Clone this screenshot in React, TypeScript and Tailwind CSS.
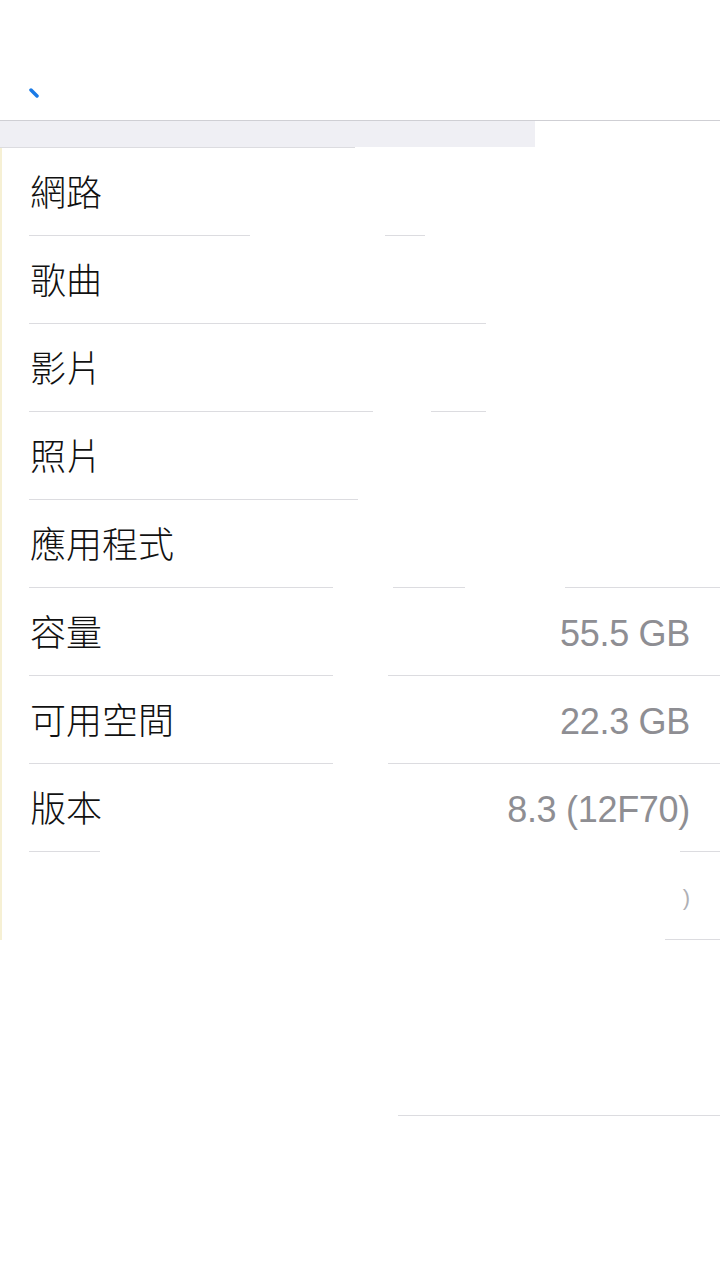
import React from 'react';

type Seg = [number, number];

interface Row {
  label: string;
  value?: string;
  faint?: boolean;
  line: Seg[];
}

const rows: Row[] = [
  { label: '網路', line: [[29, 250], [385, 425]] },
  { label: '歌曲', line: [[29, 486]] },
  { label: '影片', line: [[29, 373], [431, 486]] },
  { label: '照片', line: [[29, 358]] },
  { label: '應用程式', line: [[29, 333], [393, 465], [565, 720]] },
  { label: '容量', value: '55.5 GB', line: [[29, 333], [388, 720]] },
  { label: '可用空間', value: '22.3 GB', line: [[29, 333], [388, 720]] },
  { label: '版本', value: '8.3 (12F70)', line: [[29, 100], [680, 720]] },
  { label: '', value: ')', faint: true, line: [[665, 720]] },
  { label: '', line: [] },
  { label: '', line: [[398, 720]] },
];

// separator drawn as pieces, the rest is erased in the shot
const Separator: React.FC<{ segs: Seg[] }> = ({ segs }) => {
  let x = 0;
  return (
    <div className="flex h-px">
      {segs.map(([a, b], i) => {
        const gap = a - x;
        x = b;
        return (
          <React.Fragment key={i}>
            <div className="shrink-0" style={{ width: gap }} />
            <div className="shrink-0 bg-[#dcdce0]" style={{ width: b - a }} />
          </React.Fragment>
        );
      })}
    </div>
  );
};

const ListRow: React.FC<{ r: Row }> = ({ r }) => (
  <div>
    <div className="flex h-[87px] items-center justify-between pl-[30px] pr-[30px] pt-1">
      <span className="text-[36px] font-light leading-none text-[#111]">{r.label}</span>
      {r.value && (
        <span
          className={
            r.faint
              ? 'text-[22px] leading-none text-[#b0b0b5]'
              : 'text-[36px] leading-none tracking-[-0.3px] text-[#8e8e93]'
          }
        >
          {r.value}
        </span>
      )}
    </div>
    <Separator segs={r.line} />
  </div>
);

export default function App() {
  return (
    <div className="w-[720px] min-h-[1276px] bg-white font-['Liberation_Sans','Noto_Sans_CJK_TC',sans-serif]">
      <div className="h-[120px] px-[29px] pt-[88px]">
        <svg width="10" height="10" viewBox="0 0 10 10">
          <path d="M2 2 L8 8" stroke="#1a7ae6" strokeWidth="3.5" strokeLinecap="round" />
        </svg>
      </div>
      <div className="h-px bg-[#cfcfd4]" />
      <div className="flex h-[26px]">
        <div className="w-[535px] bg-[#efeff4]" />
        <div className="flex-1 bg-white" />
      </div>
      <div className="flex h-px">
        <div className="w-[355px] bg-[#dcdce0]" />
      </div>
      <div className="shadow-[inset_2px_0_0_#f6f0d4]">
        {rows.slice(0, 9).map((r, i) => (
          <ListRow key={i} r={r} />
        ))}
      </div>
      {rows.slice(9).map((r, i) => (
        <ListRow key={i} r={r} />
      ))}
    </div>
  );
}
